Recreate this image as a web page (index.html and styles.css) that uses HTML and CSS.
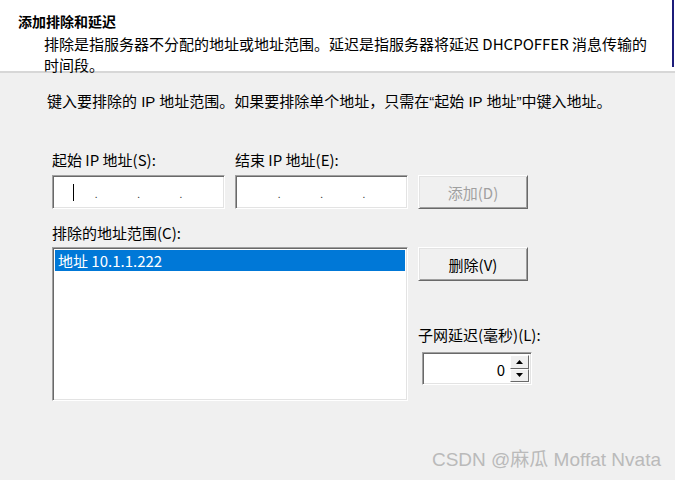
FILE: index.html
```html
<!DOCTYPE html>
<html lang="zh-CN">
<head>
    <meta charset="UTF-8">
    <title>添加排除和延迟</title>
    <link rel="stylesheet" href="styles.css">
</head>
<body>
    <div class="wizard">
        <header class="wiz-head">
            <div class="head-inner">
                <h1 class="head-title">添加排除和延迟</h1>
                <p class="head-desc">排除是指服务器不分配的地址或地址范围。延迟是指服务器将延迟 DHCPOFFER 消息传输的<br>时间段。</p>
            </div>
        </header>

        <main class="wiz-body">
            <p class="hint">键入要排除的 IP 地址范围。如果要排除单个地址，只需在“起始 IP 地址”中键入地址。</p>

            <div class="form-grid">
                <label class="lbl">起始 IP 地址(S):</label>
                <label class="lbl">结束 IP 地址(E):</label>
                <span></span>

                <div class="ip-box">
                    <span class="seg"><span class="caret"></span></span><span class="dot">.</span>
                    <span class="seg"></span><span class="dot">.</span>
                    <span class="seg"></span><span class="dot">.</span>
                    <span class="seg"></span>
                </div>
                <div class="ip-box">
                    <span class="seg"></span><span class="dot">.</span>
                    <span class="seg"></span><span class="dot">.</span>
                    <span class="seg"></span><span class="dot">.</span>
                    <span class="seg"></span>
                </div>
                <button class="btn" disabled>添加(D)</button>

                <label class="lbl list-lbl">排除的地址范围(C):</label>

                <div class="listbox">
                    <div class="list-item selected">地址 10.1.1.222</div>
                </div>

                <div class="side">
                    <button class="btn">删除(V)</button>
                    <label class="lbl delay-lbl">子网延迟(毫秒)(L):</label>
                    <div class="spin">
                        <span class="spin-value">0</span>
                        <div class="spin-btns">
                            <span class="spin-btn"><svg width="7" height="4" viewBox="0 0 7 4"><path d="M3.5 0 L7 4 L0 4 Z" fill="#000"/></svg></span>
                            <span class="spin-btn"><svg width="7" height="4" viewBox="0 0 7 4"><path d="M0 0 L7 0 L3.5 4 Z" fill="#000"/></svg></span>
                        </div>
                    </div>
                </div>
            </div>
        </main>

        <div class="watermark">CSDN @麻瓜 Moffat Nvata</div>
    </div>
</body>
</html>
```

FILE: styles.css
```css
html, body {
    margin: 0;
    padding: 0;
}

body {
    width: 675px;
    height: 480px;
    overflow: hidden;
    background-color: #f0f0f0;
    font-family: "Noto Sans CJK SC", "Noto Sans", sans-serif;
    font-size: 15px;
    color: #000;
}

.wizard {
    position: relative;
    height: 480px;
}

/* header */
.wiz-head {
    background-color: #fff;
    height: 71px;
    border-bottom: 2px solid #d7d7d7;
}

.head-inner {
    height: 67px;
    margin-right: 1px;
    border-right: 2px solid #1c1c7a;
    padding: 11px 0 0 18px;
    box-sizing: border-box;
}

.head-title {
    margin: 0;
    font-size: 14px;
    font-weight: bold;
    line-height: 20px;
}

.head-desc {
    margin: 2px 0 0 26px;
    line-height: 21px;
    white-space: nowrap;
}

/* body */
.wiz-body {
    padding: 19px 0 0 47px;
}

.hint {
    margin: 0;
    line-height: 20px;
    white-space: nowrap;
    font-family: "Liberation Sans", "Noto Sans CJK SC", sans-serif;
}

.form-grid {
    display: grid;
    grid-template-columns: 173px 173px 110px;
    column-gap: 10px;
    margin: 38px 0 0 5px;
}

.lbl {
    display: block;
    line-height: 20px;
    margin-bottom: 5px;
    white-space: nowrap;
}

.list-lbl {
    grid-column: 1 / 4;
    margin-top: 14px;
    margin-bottom: 4px;
}

/* sunken edit boxes */
.ip-box,
.listbox,
.spin {
    background-color: #fff;
    border: 1px solid;
    border-color: #a0a0a0 #fff #fff #a0a0a0;
    box-shadow: inset 1px 1px 0 #696969, inset -1px -1px 0 #e3e3e3;
    box-sizing: border-box;
}

.ip-box {
    height: 34px;
    display: flex;
    align-items: center;
    padding: 0 2px;
}

.seg {
    flex: 1;
    height: 18px;
    position: relative;
}

.dot {
    font-size: 10px;
    line-height: 10px;
    margin-top: 4px;
    color: #333;
}

.caret {
    position: absolute;
    left: 18px;
    top: 1px;
    width: 1px;
    height: 17px;
    background-color: #000;
}

/* raised buttons */
.btn {
    height: 34px;
    width: 110px;
    font-family: inherit;
    font-size: 15px;
    color: #000;
    background-color: #f0f0f0;
    border: 1px solid;
    border-color: #fff #696969 #696969 #fff;
    box-shadow: inset 1px 1px 0 #e3e3e3, inset -1px -1px 0 #a0a0a0;
    padding: 0;
}

.btn:disabled {
    color: #a0a0a0;
}

.listbox {
    grid-column: 1 / 3;
    height: 154px;
    padding: 2px 2px;
}

.list-item {
    line-height: 21px;
    padding-left: 3px;
}

.selected {
    background-color: #0078d7;
    color: #fff;
}

.side {
    display: flex;
    flex-direction: column;
    align-items: flex-start;
}

.delay-lbl {
    margin-top: 44px;
    margin-bottom: 7px;
}

.spin {
    margin-left: 4px;
    width: 110px;
    height: 33px;
    display: flex;
    align-items: stretch;
    padding: 2px;
}

.spin-value {
    flex: 1;
    text-align: right;
    line-height: 29px;
    padding-right: 5px;
}

.spin-btns {
    width: 19px;
    display: flex;
    flex-direction: column;
}

.spin-btn {
    flex: 1;
    display: flex;
    align-items: center;
    justify-content: center;
    background-color: #f0f0f0;
    border: 1px solid;
    border-color: #fff #696969 #696969 #fff;
}

.watermark {
    position: absolute;
    right: 14px;
    bottom: 9px;
    font-family: "Liberation Sans", "Noto Sans CJK SC", sans-serif;
    font-size: 19px;
    line-height: 22px;
    color: #bababa;
}
```
